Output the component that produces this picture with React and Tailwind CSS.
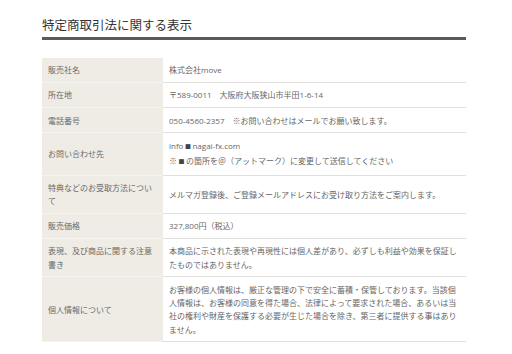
import React from 'react'

const Sq = () => <span className="mx-[1.5px] text-[6px] text-[#444]">■</span>

const rows = [
  { label: '販売社名', value: ['株式会社move'] },
  { label: '所在地', value: ['〒589-0011　大阪府大阪狭山市半田1-6-14'] },
  { label: '電話番号', value: ['050-4560-2357　※お問い合わせはメールでお願い致します。'] },
  {
    label: 'お問い合わせ先',
    value: [
      <>info<Sq />nagai-fx.com</>,
      <>※<Sq />の箇所を＠（アットマーク）に変更して送信してください</>,
    ],
  },
  { label: '特典などのお受取方法について', value: ['メルマガ登録後、ご登録メールアドレスにお受け取り方法をご案内します。'] },
  { label: '販売価格', value: ['327,800円（税込）'] },
  { label: '表現、及び商品に関する注意書き', value: ['本商品に示された表現や再現性には個人差があり、必ずしも利益や効果を保証したものではありません。'] },
  {
    label: '個人情報について',
    value: ['お客様の個人情報は、厳正な管理の下で安全に蓄積・保管しております。当該個人情報は、お客様の同意を得た場合、法律によって要求された場合、あるいは当社の権利や財産を保護する必要が生じた場合を除き、第三者に提供する事はありません。'],
  },
]

export default function App() {
  return (
    <div className="min-h-[354px] bg-white font-['Open_Sans','Noto_Sans_CJK_JP',sans-serif]">
      <div className="ml-[42px] w-[424px] pt-[16px]">
        <h1 className="border-b-[3px] border-[#5a5a5a] pb-[3px] text-[12.5px] leading-[18px] text-[#333] font-['Noto_Sans_CJK_JP',sans-serif]">
          特定商取引法に関する表示
        </h1>
        <table className="mt-[18px] w-full border-collapse text-[8px] leading-[13.3px] text-[#666]">
          <tbody>
            {rows.map((r) => (
              <tr key={r.label} className="border-b border-[#e2e0dc]">
                <th className="w-[121px] bg-[#efece5] px-[6px] py-[5.4px] text-left align-middle font-normal text-[#6a6a6a] border-b border-[#f6f4ef]">
                  {r.label}
                </th>
                <td className="px-[6px] py-[5.4px] align-middle">
                  {r.value.map((v, i) => (
                    <div key={i}>{v}</div>
                  ))}
                </td>
              </tr>
            ))}
          </tbody>
        </table>
      </div>
    </div>
  )
}
